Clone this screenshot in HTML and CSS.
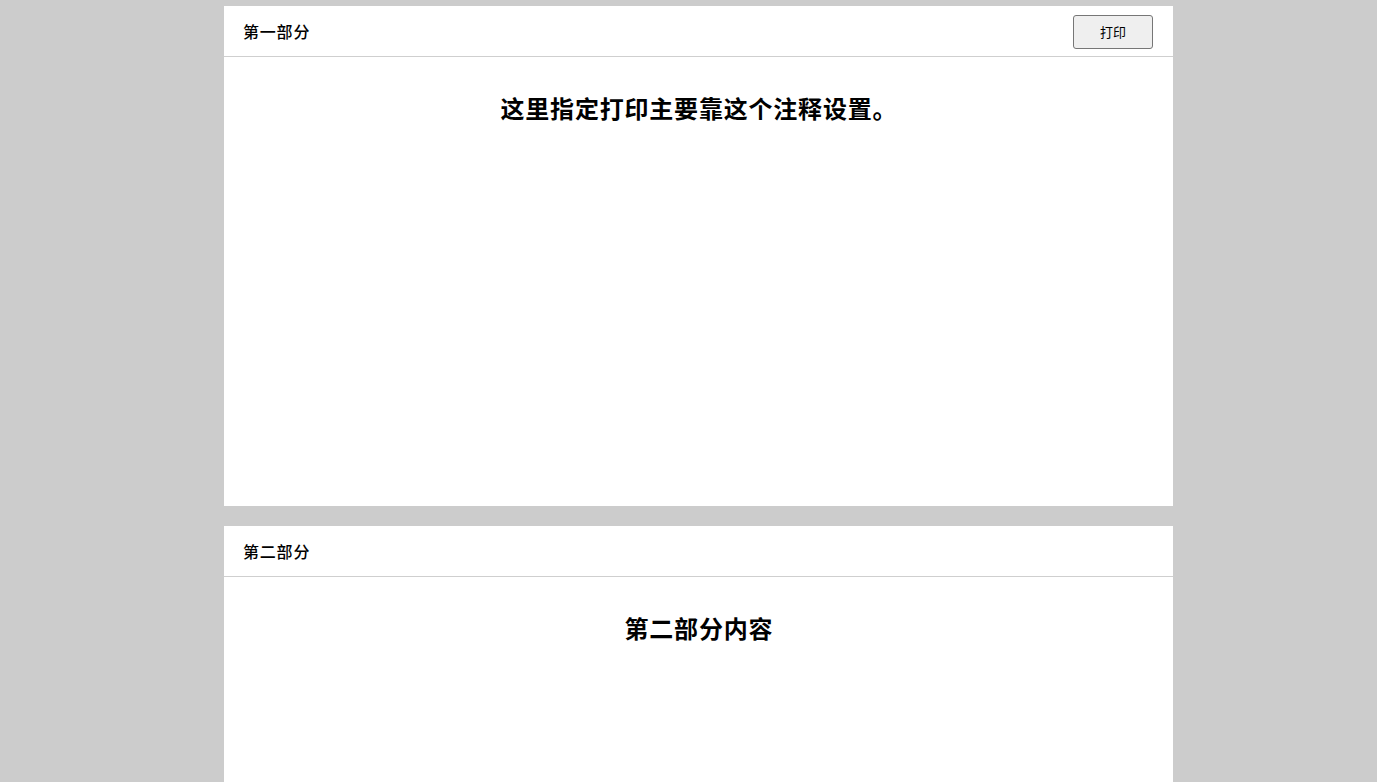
FILE: index.html
```html
<!DOCTYPE html>
<html lang="zh">
<head>
<meta charset="utf-8">
<title>打印</title>
<link rel="stylesheet" href="styles.css">
</head>
<body>
<div class="page">
  <section class="card">
    <div class="card-header">
      <span class="card-title">第一部分</span>
      <button class="print-btn">打印</button>
    </div>
    <div class="card-body">
      <h2 class="content-title">这里指定打印主要靠这个注释设置。</h2>
    </div>
  </section>
  <section class="card">
    <div class="card-header">
      <span class="card-title">第二部分</span>
    </div>
    <div class="card-body">
      <h2 class="content-title">第二部分内容</h2>
    </div>
  </section>
</div>
</body>
</html>
```
FILE: styles.css
```css
html, body {
  margin: 0;
  padding: 0;
  background: #cccccc;
}
body {
  font-family: "Noto Sans CJK SC", "Noto Sans", sans-serif;
  color: #000;
}
.page {
  display: flex;
  flex-direction: column;
  gap: 20px;
  padding: 6px 0 0 224px;
}
.card {
  width: 949px;
  height: 500px;
  background: #fff;
  display: flex;
  flex-direction: column;
}
.card-header {
  height: 50px;
  border-bottom: 1px solid #cfcfcf;
  display: flex;
  align-items: center;
  justify-content: space-between;
  padding: 0 20px;
  box-sizing: content-box;
}
.card-title {
  font-size: 16px;
  font-weight: 500;
  line-height: 20px;
  letter-spacing: 0.8px;
  margin-left: -1px;
}
.print-btn {
  width: 80px;
  height: 34px;
  border: 1px solid #767676;
  border-radius: 3px;
  background: #efefef;
  font-family: "Noto Sans CJK SC", sans-serif;
  font-size: 13px;
  color: #000;
  padding: 0;
  margin-top: 1px;
}
.card-body {
  flex: 1;
}
.content-title {
  margin: 36px 0 0 0;
  text-align: center;
  font-size: 24px;
  font-weight: 600;
  line-height: 29px;
  letter-spacing: 0.8px;
  text-indent: 0.8px;
}
```
